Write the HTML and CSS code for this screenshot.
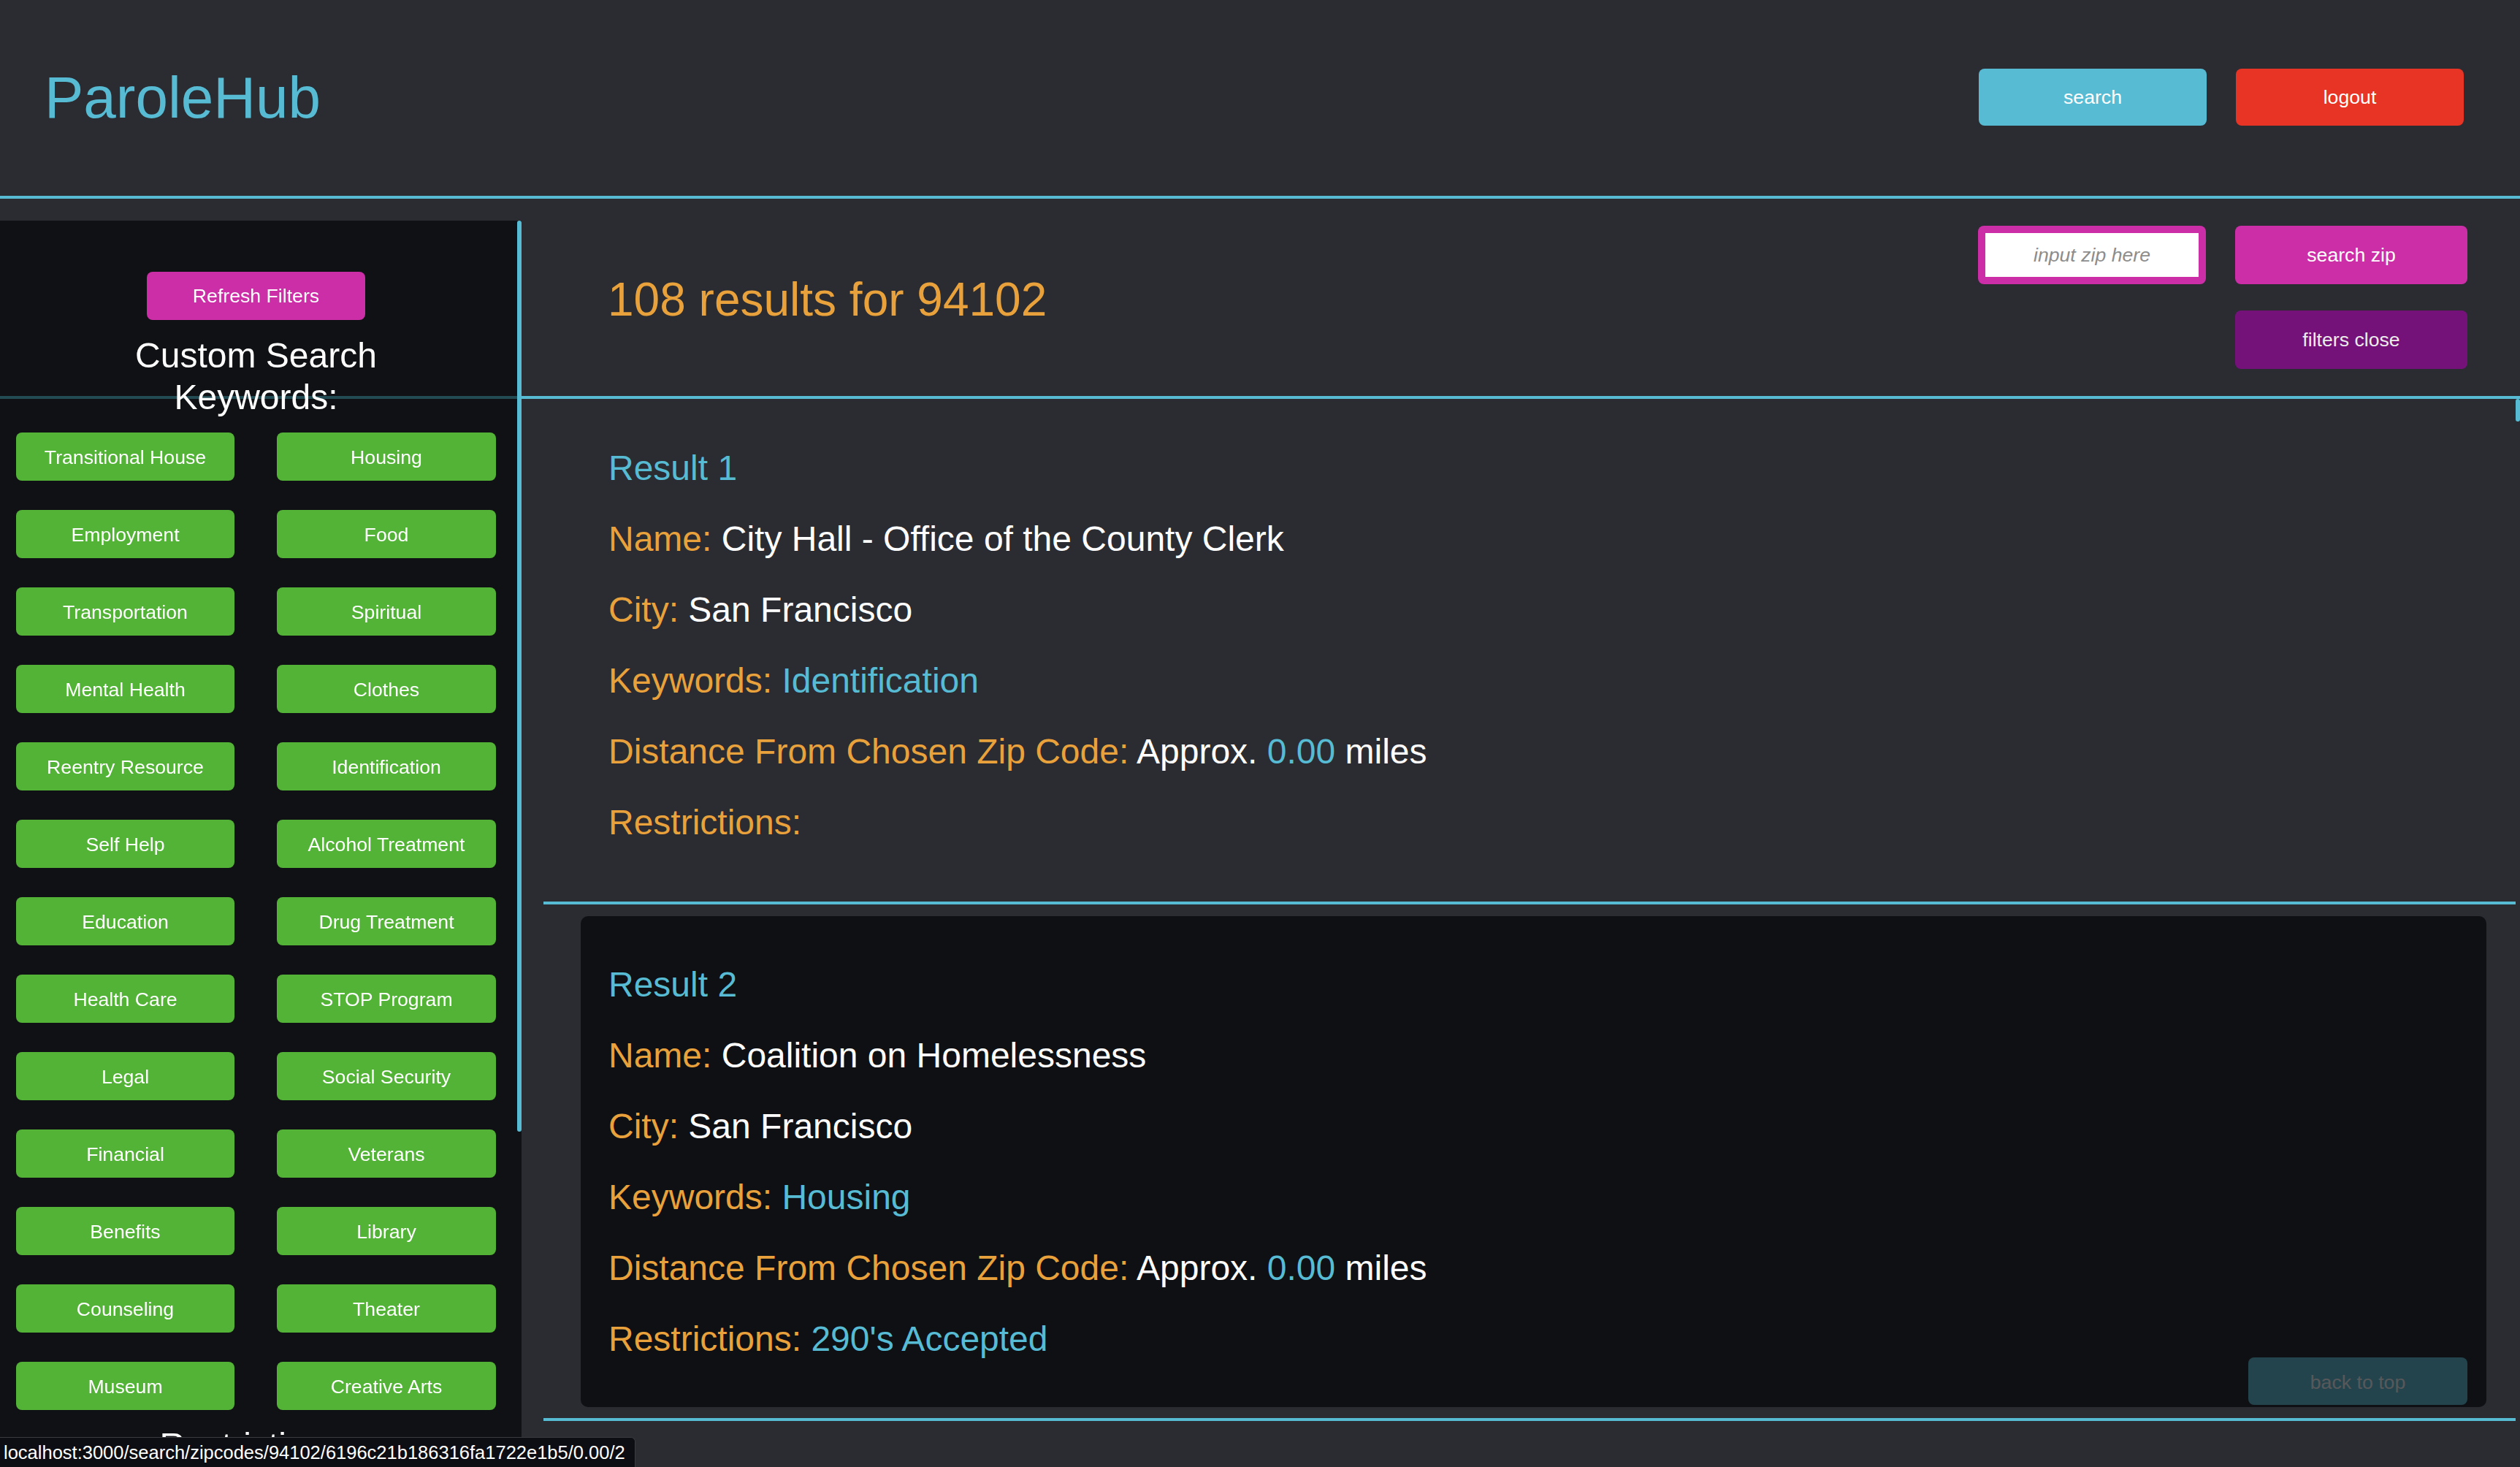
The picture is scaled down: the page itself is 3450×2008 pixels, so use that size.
FILE: index.html
```html
<!DOCTYPE html>
<html lang="en">
<head>
<meta charset="utf-8">
<title>ParoleHub</title>
<link rel="stylesheet" href="styles.css">
</head>
<body>
<header class="topbar">
  <div class="logo">ParoleHub</div>
  <nav class="top-actions">
    <button class="btn btn-cyan">search</button>
    <button class="btn btn-red">logout</button>
  </nav>
</header>

<main class="main">
  <section class="results-head">
    <h1 class="results-title">108 results for 94102</h1>
    <div class="zip-tools">
      <div class="zip-input"><input type="text" placeholder="input zip here"></div>
      <button class="btn btn-magenta btn-zip">search zip</button>
      <button class="btn btn-purple btn-filters">filters close</button>
    </div>
  </section>

  <div class="results">
    <div class="result">
      <div class="card">
        <p class="r-title">Result 1</p>
        <p><span class="lbl">Name:</span> City Hall - Office of the County Clerk</p>
        <p><span class="lbl">City:</span> San Francisco</p>
        <p><span class="lbl">Keywords:</span> <span class="hl">Identification</span></p>
        <p><span class="lbl">Distance From Chosen Zip Code:</span> Approx. <span class="hl">0.00</span> miles</p>
        <p><span class="lbl">Restrictions:</span></p>
      </div>
    </div>
    <div class="result">
      <div class="card card-hover">
        <p class="r-title">Result 2</p>
        <p><span class="lbl">Name:</span> Coalition on Homelessness</p>
        <p><span class="lbl">City:</span> San Francisco</p>
        <p><span class="lbl">Keywords:</span> <span class="hl">Housing</span></p>
        <p><span class="lbl">Distance From Chosen Zip Code:</span> Approx. <span class="hl">0.00</span> miles</p>
        <p><span class="lbl">Restrictions:</span> <span class="hl">290's Accepted</span></p>
      </div>
    </div>
  </div>
</main>

<aside class="sidebar">
  <div class="sb-inner">
    <button class="btn btn-magenta btn-refresh">Refresh Filters</button>
    <h3 class="sb-title">Custom Search Keywords:</h3>
    <div class="kw-grid">
      <button class="btn btn-green">Transitional House</button>
      <button class="btn btn-green">Housing</button>
      <button class="btn btn-green">Employment</button>
      <button class="btn btn-green">Food</button>
      <button class="btn btn-green">Transportation</button>
      <button class="btn btn-green">Spiritual</button>
      <button class="btn btn-green">Mental Health</button>
      <button class="btn btn-green">Clothes</button>
      <button class="btn btn-green">Reentry Resource</button>
      <button class="btn btn-green">Identification</button>
      <button class="btn btn-green">Self Help</button>
      <button class="btn btn-green">Alcohol Treatment</button>
      <button class="btn btn-green">Education</button>
      <button class="btn btn-green">Drug Treatment</button>
      <button class="btn btn-green">Health Care</button>
      <button class="btn btn-green">STOP Program</button>
      <button class="btn btn-green">Legal</button>
      <button class="btn btn-green">Social Security</button>
      <button class="btn btn-green">Financial</button>
      <button class="btn btn-green">Veterans</button>
      <button class="btn btn-green">Benefits</button>
      <button class="btn btn-green">Library</button>
      <button class="btn btn-green">Counseling</button>
      <button class="btn btn-green">Theater</button>
      <button class="btn btn-green">Museum</button>
      <button class="btn btn-green">Creative Arts</button>
    </div>
    <h3 class="sb-title">Restrictions:</h3>
  </div>
  <div class="sb-thumb"></div>
</aside>

<div class="main-thumb"></div>

<button class="btn back-top">back to top</button>

<div class="status">localhost:3000/search/zipcodes/94102/6196c21b186316fa1722e1b5/0.00/2</div>
</body>
</html>
```

FILE: styles.css
```css
* { box-sizing: border-box; }

html, body {
  margin: 0;
  padding: 0;
  height: 100%;
  overflow: hidden;
}

body {
  background: #2a2c32;
  color: #ffffff;
  font-family: "Liberation Sans", Arial, Helvetica, sans-serif;
}

.btn {
  border: none;
  border-radius: 8px;
  font-family: "Liberation Sans", Arial, Helvetica, sans-serif;
  font-size: 26.67px;
  color: #ffffff;
  padding: 0;
  cursor: pointer;
}

.btn-cyan { background: #57bbd3; }
.btn-red { background: #e83424; }
.btn-magenta { background: #cc2ea7; }
.btn-purple { background: #74127a; color: #ececec; }
.btn-green { background: #53b337; }

/* header */
.topbar {
  height: 272px;
  border-bottom: 4px solid #57bbd3;
  display: flex;
  align-items: center;
  justify-content: space-between;
  padding: 0 77px 0 61px;
}

.logo {
  font-size: 80px;
  color: #57bbd3;
  line-height: 92px;
}

.top-actions {
  display: flex;
  gap: 40px;
  margin-top: -2px;
}

.top-actions .btn {
  width: 312px;
  height: 78px;
}

/* results header */
.results-head {
  height: 274px;
  border-bottom: 4px solid #57bbd3;
  display: flex;
  align-items: center;
  justify-content: space-between;
  padding: 0 72px 0 832px;
}

.results-title {
  margin: 6px 0 0 0;
  font-size: 64px;
  font-weight: normal;
  line-height: 74px;
  color: #e9a23b;
}

.zip-tools {
  display: grid;
  grid-template-columns: 312px 318px;
  grid-template-rows: 80px 80px;
  column-gap: 40px;
  row-gap: 36px;
}

.zip-input {
  background: #cc2ea7;
  border-radius: 8px;
  padding: 10px;
}

.zip-input input {
  width: 100%;
  height: 100%;
  border: none;
  outline: none;
  background: #ffffff;
  text-align: center;
  font-family: "Liberation Sans", Arial, Helvetica, sans-serif;
  font-size: 26.67px;
  font-style: italic;
  padding: 0;
}

.zip-input input::placeholder {
  color: #8d8d8d;
  font-style: italic;
}

.btn-filters {
  grid-column: 2;
}

/* results list */
.results {
  margin: 0 6px 0 744px;
}

.result {
  border-bottom: 4px solid #57bbd3;
  padding: 16px 40px 15px 51px;
}

.result:first-child {
  padding-top: 1px;
}

.card {
  padding: 66px 38px;
  border-radius: 10px;
}

.card-hover {
  background: #0e1014;
}

.card p {
  margin: 0 0 42px 0;
  font-size: 48px;
  line-height: 55px;
  color: #ffffff;
}

.card p:last-child {
  margin-bottom: 0;
}

.card .r-title { color: #57bbd3; }
.lbl { color: #e9a23b; }
.hl { color: #57bbd3; }

/* sidebar overlay */
.sidebar {
  position: fixed;
  top: 302px;
  left: 0;
  bottom: 0;
  width: 714px;
  background: rgba(0, 0, 0, 0.6);
  overflow: hidden;
}

.sb-inner {
  width: 679px;
  padding: 70px 0 0 22px;
  display: flex;
  flex-direction: column;
  align-items: center;
}

.btn-refresh {
  width: 299px;
  height: 66px;
}

.sb-title {
  margin: 20px 0;
  max-width: 420px;
  font-size: 48px;
  line-height: 57px;
  font-weight: normal;
  text-align: center;
  color: #ffffff;
}

.kw-grid {
  display: grid;
  grid-template-columns: 299px 300px;
  column-gap: 58px;
  row-gap: 40px;
  width: 657px;
}

.kw-grid .btn {
  height: 66px;
  padding-top: 2px;
}

.sb-thumb {
  position: absolute;
  top: 0;
  left: 708px;
  width: 6px;
  height: 1247px;
  border-radius: 3px;
  background: #57bbd3;
}

.main-thumb {
  position: fixed;
  top: 546px;
  right: 0;
  width: 6px;
  height: 31px;
  border-radius: 3px;
  background: #57bbd3;
}

.back-top {
  position: fixed;
  right: 72px;
  bottom: 85px;
  width: 300px;
  height: 65px;
  padding-top: 4px;
  background: #57bbd3;
  color: #ffffff;
  opacity: 0.3;
}

.status {
  position: fixed;
  left: 0;
  bottom: 0;
  width: 870px;
  height: 41px;
  padding: 0 0 0 5px;
  background: #0d0e13;
  border-top: 1px solid #3a3b41;
  border-right: 1px solid #3a3b41;
  border-top-right-radius: 6px;
  font-size: 25.5px;
  line-height: 40px;
  color: #ffffff;
  white-space: nowrap;
  overflow: hidden;
}
```
